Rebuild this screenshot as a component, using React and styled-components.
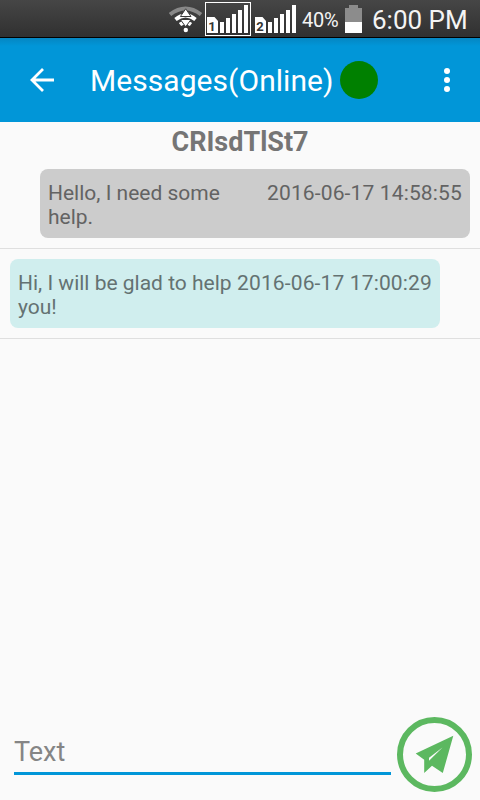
import React from 'react';
import styled, { createGlobalStyle } from 'styled-components';

const messages = [
    { id: 1, text: 'Hello, I need some help.', time: '2016-06-17 14:58:55', mine: true },
    { id: 2, text: 'Hi, I will be glad to help you!', time: '2016-06-17 17:00:29', mine: false },
];

const bars = [[15, 20], [21, 16], [27, 12], [33, 8], [39, 3]];

function Signal({ sim }) {
    return (
        <SignalIcon width="46" height="34" viewBox="0 0 46 34">
            {sim === 1 && <rect x="0.5" y="0.5" width="45" height="33" fill="none" stroke="#fff" />}
            <path d="M2 15h7.5l3.5 4v12H2z" fill="#fff" />
            <text x="7" y="28.5" textAnchor="middle" fontSize="13" fontWeight="700" fill="#333">{sim}</text>
            {bars.map(([x, y]) => (
                <rect key={x} x={x} y={y} width="4" height={31 - y} fill="#fff" />
            ))}
        </SignalIcon>
    );
}

function Wifi() {
    return (
        <svg width="34" height="28" viewBox="0 0 34 28">
            <path d="M1 9.5Q16.5-2.5 32 9.5" fill="none" stroke="#888" strokeWidth="4" />
            <path d="M6.5 14.5Q16.5 6.5 26.5 14.5M11 19.5Q16.5 15.5 22 19.5" fill="none" stroke="#fff" strokeWidth="3.8" />
            <circle cx="16.8" cy="25" r="2.2" fill="#fff" />
            <path d="M16.7 3.8l5.3 7.7H11.4zM16.7 21.8l-5.3-7.3H22z" fill="#fff" stroke="#3b3b3b" strokeWidth="1" />
        </svg>
    );
}

export default function App() {
    return (
        <Screen>
            <GlobalStyle />
            <StatusBar>
                <Wifi />
                <Signal sim={1} />
                <Signal sim={2} />
                <Percent>40%</Percent>
                <svg width="17" height="28" viewBox="0 0 17 28">
                    <path d="M4 0h9v3h4v14H0V3h4z" fill="#8c8c8c" />
                    <path d="M0 17h17v11H0z" fill="#fff" />
                </svg>
                <Clock>6:00 PM</Clock>
            </StatusBar>
            <Toolbar>
                <BackButton aria-label="Back">
                    <svg width="26" height="26" viewBox="0 0 26 26" fill="none" stroke="#fff" strokeWidth="2.8">
                        <path d="M25 13H3M14 2L3 13l11 11" />
                    </svg>
                </BackButton>
                <Title>Messages(Online)</Title>
                <OnlineDot />
                <MenuButton aria-label="More options">
                    <svg width="6" height="24" viewBox="0 0 6 24" fill="#fff">
                        <circle cx="3" cy="3" r="3" />
                        <circle cx="3" cy="12" r="3" />
                        <circle cx="3" cy="21" r="3" />
                    </svg>
                </MenuButton>
            </Toolbar>
            <Contact>CRIsdTlSt7</Contact>
            <MessageList>
                {messages.map(({ id, text, time, mine }) => (
                    <Row key={id} $mine={mine}>
                        <Bubble $mine={mine}>
                            <MessageText>{text}</MessageText>
                            <Time>{time}</Time>
                        </Bubble>
                    </Row>
                ))}
            </MessageList>
            <Composer>
                <Input placeholder="Text" />
                <SendButton aria-label="Send">
                    <svg width="75" height="75" viewBox="0 0 75 75">
                        <circle cx="37.5" cy="37.5" r="34.5" fill="none" stroke="#5cb860" strokeWidth="6" />
                        <path d="M56.3 18.7L18.7 36.5l8.5 6.3V56l7.8-7.3L45.8 56z" fill="#5cb860" />
                        <path d="M45.5 30.5L32 40.8v3z" fill="#fafafa" />
                    </svg>
                </SendButton>
            </Composer>
        </Screen>
    );
}

const GlobalStyle = createGlobalStyle`
* {
    box-sizing: border-box;
}
body {
    margin: 0;
    font-family: Roboto, sans-serif;
}
svg {
    display: block;
    flex: none;
}
button {
    padding: 0;
    border: 0;
    background: none;
}
`

const Screen = styled.div`
display: flex;
flex-direction: column;
width: 480px;
height: 800px;
overflow: hidden;
background: #fafafa;
`

const StatusBar = styled.div`
display: flex;
align-items: flex-start;
height: 38px;
padding: 5px 0 0 169px;
background: linear-gradient(#464646, #303030);
border-bottom: 1px solid #000;
color: #f4f4f4;
`

const SignalIcon = styled.svg`
margin: -3px 0 0 2px;
`

const Percent = styled.span`
width: 43px;
margin-left: 3px;
font-size: 20px;
line-height: 31px;
letter-spacing: -0.2px;
white-space: nowrap;
`

const Clock = styled.span`
margin-left: 10px;
font-size: 26px;
line-height: 31px;
white-space: nowrap;
`

const Toolbar = styled.header`
display: flex;
align-items: center;
height: 84px;
padding: 0 30px 0 29px;
background: linear-gradient(#0586c2, #0196d8 8px);
`

const BackButton = styled.button`
width: 26px;
`

const Title = styled.h1`
width: 244px;
margin: 0 0 0 35px;
padding-top: 2px;
color: #fff;
font-size: 30px;
font-weight: 400;
line-height: 36px;
letter-spacing: 0.06px;
white-space: nowrap;
`

const OnlineDot = styled.span`
width: 38px;
height: 38px;
margin-left: 6px;
border-radius: 50%;
background: #008000;
`

const MenuButton = styled.button`
margin-left: auto;
`

const Contact = styled.h2`
height: 37px;
margin: 0;
color: #757575;
font-size: 27px;
font-weight: 700;
line-height: 41px;
text-align: center;
`

const MessageList = styled.main`
flex: 1;
`

const Row = styled.div`
display: flex;
justify-content: ${props => props.$mine ? 'flex-end' : 'flex-start'};
height: 90px;
padding: 10px;
border-bottom: 1px solid #dfdfdf;
`

const Bubble = styled.div`
display: flex;
width: 430px;
height: 69px;
padding: 12px 8px;
border-radius: 8px;
background: ${props => props.$mine ? '#cccccc' : '#d0eeee'};
color: ${props => props.$mine ? '#636363' : '#647272'};
font-size: 21px;
line-height: 24px;
`

const MessageText = styled.span`
width: 219px;
`

const Time = styled.time`
letter-spacing: 0.14px;
white-space: nowrap;
`

const Composer = styled.footer`
display: flex;
height: 83px;
padding: 0 8px 8px 14px;
`

const Input = styled.input`
width: 377px;
height: 58px;
padding: 15px 0 0;
border: 0;
border-bottom: 3px solid #0196d8;
outline: 0;
background: none;
font: 27px Roboto, sans-serif;
&::placeholder {
    color: #858585;
    opacity: 1;
}
`

const SendButton = styled.button`
width: 75px;
height: 75px;
margin-left: 6px;
`
